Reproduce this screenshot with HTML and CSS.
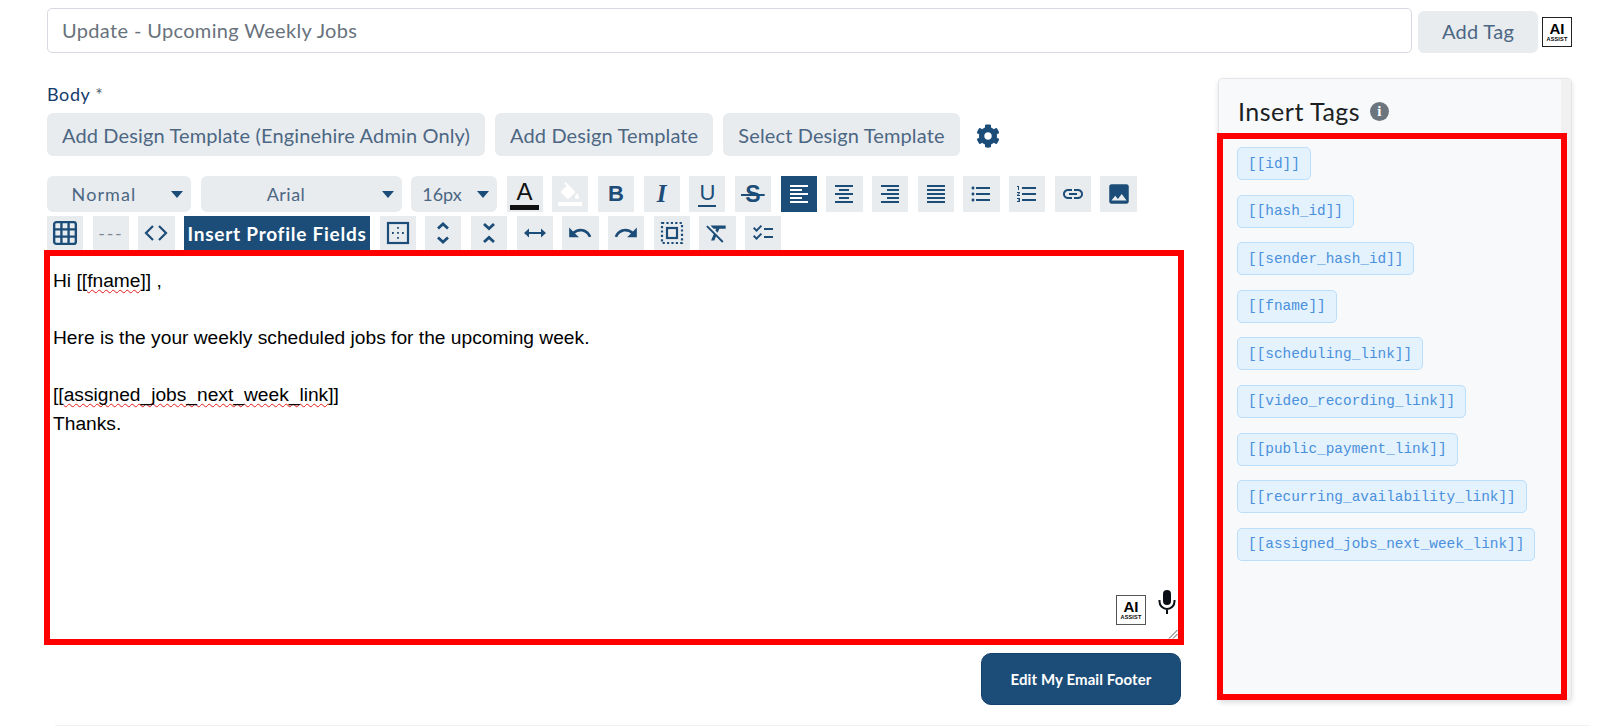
FILE: index.html
```html
<!DOCTYPE html>
<html lang="en">
<head>
<meta charset="utf-8">
<title>Update - Upcoming Weekly Jobs</title>
<link rel="stylesheet" href="styles.css">
</head>
<body>
<div class="page">
  <div class="top-row">
    <div class="subject">Update - Upcoming Weekly Jobs</div>
    <div class="btn add-tag">Add Tag</div>
    <div class="ai"><b>AI</b><small>ASSIST</small></div>
  </div>
  <div class="main">
    <div class="left">
      <div class="label"><span class="label-t">Body</span> <span class="star">*</span></div>
      <div class="tpl-row">
        <div class="btn tpl">Add Design Template (Enginehire Admin Only)</div>
        <div class="btn tpl">Add Design Template</div>
        <div class="btn tpl">Select Design Template</div>
        <svg class="gear" viewBox="0 0 512 512"><path d="M487.4 315.7l-42.6-24.6c4.3-23.2 4.3-47 0-70.2l42.6-24.6c4.9-2.8 7.1-8.6 5.5-14-11.1-35.6-30-67.8-54.7-94.6-3.8-4.1-10-5.1-14.8-2.3L380.8 110c-17.9-15.4-38.5-27.3-60.8-35.1V25.8c0-5.6-3.9-10.5-9.4-11.7-36.7-8.2-74.3-7.8-109.2 0-5.5 1.2-9.4 6.1-9.4 11.7V75c-22.2 7.9-42.8 19.8-60.8 35.1L88.7 85.5c-4.9-2.8-11-1.9-14.8 2.3-24.7 26.7-43.6 58.9-54.7 94.6-1.7 5.4.6 11.2 5.5 14L67.3 221c-4.3 23.2-4.3 47 0 70.2l-42.6 24.6c-4.9 2.8-7.1 8.6-5.5 14 11.1 35.6 30 67.8 54.7 94.6 3.8 4.1 10 5.1 14.8 2.3l42.6-24.6c17.9 15.4 38.5 27.3 60.8 35.1v49.2c0 5.6 3.9 10.5 9.4 11.7 36.7 8.2 74.3 7.8 109.2 0 5.5-1.2 9.4-6.1 9.4-11.7v-49.2c22.2-7.9 42.8-19.8 60.8-35.1l42.6 24.6c4.9 2.8 11 1.9 14.8-2.3 24.7-26.7 43.6-58.9 54.7-94.6 1.5-5.5-.7-11.3-5.6-14.1zM256 336c-44.1 0-80-35.9-80-80s35.9-80 80-80 80 35.9 80 80-35.9 80-80 80z"/></svg>
      </div>
      <div class="tools row1">
        <div class="sel sel-normal"><span>Normal</span><i class="caret"></i></div>
        <div class="sel sel-arial"><span>Arial</span><i class="caret"></i></div>
        <div class="sel sel-size"><span>16px</span><i class="caret"></i></div>
        <div class="tb color"><span class="color-a">A</span></div>
        <div class="tb fill"><svg class="ic" viewBox="0 0 24 24"><path class="wh" d="M7.600 0L6.200 1.400l2.400 2.400-5.200 5.100c-.6.6-.6 1.600 0 2.200l5.500 5.500c.3.300.7.400 1.100.4s.8-.1 1-.4l5.600-5.500c.5-.6.5-1.600 0-2.200zM19 11.500s-2 2.200-2 3.500c0 1.100.9 2 2 2s2-.9 2-2c0-1.300-2-3.500-2-3.500z"/><rect class="wh" x="0" y="20" width="24" height="4"/></svg></div>
        <div class="tb"><span class="t-b">B</span></div>
        <div class="tb"><span class="t-i">I</span></div>
        <div class="tb"><span class="t-u">U</span></div>
        <div class="tb"><span class="t-s">S</span></div>
        <div class="tb active"><svg class="ic" viewBox="0 0 24 24"><path d="M15 15H3v2h12v-2zm0-8H3v2h12V7zM3 13h18v-2H3v2zm0 8h18v-2H3v2zM3 3v2h18V3H3z"/></svg></div>
        <div class="tb"><svg class="ic" viewBox="0 0 24 24"><path d="M7 15v2h10v-2H7zm-4 6h18v-2H3v2zm0-8h18v-2H3v2zm4-6v2h10V7H7zM3 3v2h18V3H3z"/></svg></div>
        <div class="tb"><svg class="ic" viewBox="0 0 24 24"><path d="M3 21h18v-2H3v2zm6-4h12v-2H9v2zm-6-4h18v-2H3v2zm6-4h12V7H9v2zM3 3v2h18V3H3z"/></svg></div>
        <div class="tb"><svg class="ic" viewBox="0 0 24 24"><path d="M3 21h18v-2H3v2zm0-4h18v-2H3v2zm0-4h18v-2H3v2zm0-4h18V7H3v2zm0-6v2h18V3H3z"/></svg></div>
        <div class="tb"><svg class="ic" viewBox="0 0 24 24"><path d="M4 10.500c-.83 0-1.500.67-1.500 1.500s.67 1.500 1.500 1.500 1.500-.67 1.500-1.500-.67-1.500-1.500-1.500zm0-6c-.83 0-1.500.67-1.500 1.500S3.170 7.500 4 7.500 5.500 6.830 5.500 6 4.830 4.500 4 4.500zm0 12c-.83 0-1.500.68-1.500 1.500s.68 1.500 1.500 1.500 1.500-.68 1.500-1.500-.67-1.500-1.500-1.500zM7 19h14v-2H7v2zm0-6h14v-2H7v2zm0-8v2h14V5H7z"/></svg></div>
        <div class="tb"><svg class="ic" viewBox="0 0 24 24"><path d="M2 17h2v.5H3v1h1v.5H2v1h3v-4H2v1zm1-9h1V4H2v1h1v3zm-1 3h1.800L2 13.100v.9h3v-1H3.200L5 10.900V10H2v1zm5-6v2h14V5H7zm0 14h14v-2H7v2zm0-6h14v-2H7v2z"/></svg></div>
        <div class="tb"><svg class="ic" viewBox="0 0 24 24"><path d="M3.900 12c0-1.710 1.390-3.100 3.100-3.100h4V7H7c-2.760 0-5 2.240-5 5s2.240 5 5 5h4v-1.900H7c-1.710 0-3.100-1.390-3.100-3.100zM8 13h8v-2H8v2zm9-6h-4v1.900h4c1.710 0 3.100 1.390 3.100 3.100s-1.390 3.100-3.100 3.100h-4V17h4c2.760 0 5-2.240 5-5s-2.240-5-5-5z"/></svg></div>
        <div class="tb"><svg class="ic ic-lg" viewBox="0 0 24 24"><path d="M21 19V5c0-1.100-.9-2-2-2H5c-1.100 0-2 .9-2 2v14c0 1.100.9 2 2 2h14c1.100 0 2-.9 2-2zM8.500 13.500l2.500 3.010L14.500 12l4.500 6H5l3.500-4.500z"/></svg></div>
      </div>
      <div class="tools row2">
        <div class="tb"><svg class="ic ic-lg" viewBox="0 0 24 24"><rect class="ln" x="2" y="2" width="20" height="20" rx="2"/><path class="ln" d="M2 8.700h20M2 15.300h20M8.700 2v20M15.300 2v20"/></svg></div>
        <div class="tb"><span class="t-hr">---</span></div>
        <div class="tb"><svg class="ic" viewBox="0 0 24 24"><path class="ln" d="M9 5l-7 7 7 7M15 5l7 7-7 7"/></svg></div>
        <div class="tb active ipf">Insert Profile Fields</div>
        <div class="tb"><svg class="ic" viewBox="0 0 24 24"><rect class="ln" x="2" y="2" width="20" height="20"/><path class="dots" d="M12 6v2M12 11v2M12 16v2M6 12h2M16 12h2"/></svg></div>
        <div class="tb"><svg class="ic" viewBox="0 0 24 24"><path class="ln-b" d="M7 7.500L12 3l5 4.500M7 16.500l5 4.500 5-4.500"/></svg></div>
        <div class="tb"><svg class="ic" viewBox="0 0 24 24"><path class="ln-b" d="M7 3l5 4.500L17 3M7 21l5-4.500 5 4.500"/></svg></div>
        <div class="tb"><svg class="ic" viewBox="0 0 24 24"><path d="M1 12l5-4.500V11h12V7.500l5 4.500-5 4.500V13H6v3.500z"/></svg></div>
        <div class="tb"><svg class="ic ic-lg" viewBox="0 0 24 24"><path d="M12.500 8c-2.650 0-5.050.99-6.900 2.600L2 7v9h9l-3.620-3.620c1.390-1.160 3.160-1.880 5.120-1.880 3.540 0 6.550 2.310 7.600 5.500l2.370-.78C21.080 11.030 17.150 8 12.500 8z"/></svg></div>
        <div class="tb"><svg class="ic ic-lg" viewBox="0 0 24 24"><path d="M18.400 10.600C16.550 8.990 14.150 8 11.500 8c-4.650 0-8.580 3.030-9.960 7.220L3.900 16c1.050-3.190 4.050-5.500 7.600-5.500 1.950 0 3.730.72 5.120 1.880L13 16h9V7l-3.600 3.600z"/></svg></div>
        <div class="tb"><svg class="ic" viewBox="0 0 24 24"><rect class="ln" x="7" y="7" width="10" height="10"/><rect class="dash" x="2" y="2" width="20" height="20"/></svg></div>
        <div class="tb"><svg class="ic ic-lg" viewBox="0 0 24 24"><path d="M3.270 5L2 6.270l6.970 6.970L6.500 19h3l1.570-3.660L16.730 21 18 19.730 3.550 5.270 3.270 5zM6 5v.18L8.820 8h2.400l-.72 1.680 2.100 2.100L14.210 8H20V5H6z"/></svg></div>
        <div class="tb"><svg class="ic" viewBox="0 0 24 24"><path d="M22 7h-9v2h9V7zm0 8h-9v2h9v-2zM5.540 11L2 7.460l1.410-1.410 2.120 2.120 4.240-4.240 1.410 1.410L5.540 11zm0 8L2 15.460l1.410-1.410 2.120 2.120 4.240-4.240 1.410 1.410L5.540 19z"/></svg></div>
      </div>
      <div class="editor-frame">
        <div class="editor">
          <p>Hi [[<span class="sp">fname</span>]] ,</p>
          <p><br></p>
          <p>Here is the your weekly scheduled jobs for the upcoming week.</p>
          <p><br></p>
          <p>[[<span class="sp">assigned_jobs_next_week_link</span>]]</p>
          <p>Thanks.</p>
          <div class="ai ai-editor"><b>AI</b><small>ASSIST</small></div>
          <svg class="mic" viewBox="0 0 18 24"><rect x="5" y="0" width="8" height="15" rx="4"/><path class="mic-l" d="M1.500 10v1.500a7.500 7.500 0 0 0 15 0V10M9 19v5"/></svg>
          <svg class="grip" viewBox="0 0 10 10"><path d="M9.500 1L1 9.500M9.500 5L5 9.500"/></svg>
        </div>
      </div>
      <div class="foot-row"><div class="footer-btn">Edit My Email Footer</div></div>
    </div>
    <aside class="panel">
      <div class="track"></div>
      <h2 class="panel-h">Insert Tags <span class="info">i</span></h2>
      <div class="tag-frame">
        <span class="tag">[[id]]</span>
        <span class="tag">[[hash_id]]</span>
        <span class="tag">[[sender_hash_id]]</span>
        <span class="tag">[[fname]]</span>
        <span class="tag">[[scheduling_link]]</span>
        <span class="tag">[[video_recording_link]]</span>
        <span class="tag">[[public_payment_link]]</span>
        <span class="tag">[[recurring_availability_link]]</span>
        <span class="tag">[[assigned_jobs_next_week_link]]</span>
      </div>
    </aside>
  </div>
  <div class="rule"></div>
</div>
</body>
</html>
```
FILE: styles.css
```css
* { box-sizing: border-box; }
html, body { margin: 0; padding: 0; background: #fff; overflow: hidden; }
body { font-family: "Lato", "Noto Sans", sans-serif; color: #4c6783; }

.page { width: 1600px; height: 726px; padding-top: 8px; }

.top-row { display: flex; align-items: flex-end; margin-left: 47px; width: 1525px; }
.subject {
  width: 1365px; height: 45px; border: 1px solid #d6dae0; border-radius: 5px;
  display: flex; align-items: center; padding: 0 0 2px 14px;
  font-size: 20px; letter-spacing: .35px; color: #68727c;
}
.btn {
  background: #e9ecef; border-radius: 6px; display: flex; align-items: center; justify-content: center;
  font-size: 20px; color: #4c6783;
}
.add-tag { width: 120px; height: 42px; margin-left: 6px; padding-bottom: 3px; letter-spacing: .3px; }
.ai {
  width: 30px; height: 30px; border: 1px solid #222; background: #fff; color: #000;
  display: flex; flex-direction: column; align-items: center; justify-content: center; font-family: "Liberation Sans", sans-serif;
}
.ai b { font-size: 15px; line-height: 14px; font-weight: 700; }
.ai small { font-size: 5.5px; line-height: 7px; font-weight: 700; letter-spacing: .2px; }
.top-row > .ai { margin-left: 4px; margin-bottom: 6px; }

.main { display: flex; margin-top: 25px; margin-left: 44px; }
.left { width: 1140px; }
.label { height: 35px; padding: 5px 0 0 3px; font-size: 18px; line-height: 22px; letter-spacing: .6px; }
.label-t { color: #123c6c; }
.star { color: #55606b; font-size: 18px; }

.tpl-row { display: flex; align-items: center; gap: 10px; margin-left: 3px; }
.tpl { height: 43px; padding: 0 15px; letter-spacing: .13px; }
.tpl-row .tpl:nth-child(3) { margin-right: 6px; }
.gear { width: 24px; height: 24px; fill: #1c4d78; margin-top: 2px; }

.tools { display: flex; margin-left: 3px; }
.row1 { margin-top: 20px; height: 36px; gap: 9.5px; }
.row2 { margin-top: 4px; height: 34px; gap: 9.5px; }

.sel {
  height: 36px; background: #e9ecef; border-radius: 6px; display: flex; align-items: center;
  font-size: 18px; color: #4c6783; padding-right: 8px;
}
.sel span { flex: 1; text-align: center; margin-right: 10px; }
.sel-normal { width: 144px; letter-spacing: 1.1px; }
.sel-arial { width: 201px; letter-spacing: .5px; }
.sel-size { width: 86px; letter-spacing: 0; }
.sel-size span { margin-right: 4px; }
.caret { width: 0; height: 0; border-left: 6px solid transparent; border-right: 6px solid transparent; border-top: 7px solid #1c4d78; }

.tb {
  width: 36.2px; background: #e9ecef; display: flex; align-items: center; justify-content: center;
  color: #1c4d78; flex: none;
}
.ic { width: 24px; height: 24px; fill: #1c4d78; }
.ic-lg { width: 26px; height: 26px; }
.active { background: #1c4d78; }
.active .ic { fill: #fff; }
.ln { fill: none; stroke: #1c4d78; stroke-width: 2.2px; }
.ln-b { fill: none; stroke: #1c4d78; stroke-width: 2.8px; }
.dots { fill: none; stroke: #1c4d78; stroke-width: 1.8px; stroke-dasharray: 1.8 1.8; }
.dash { fill: none; stroke: #1c4d78; stroke-width: 2.2px; stroke-dasharray: 2.2 2.2; }
.wh { fill: #fff; }

.color-a {
  font-family: "Liberation Sans", sans-serif; font-size: 24px; line-height: 26px; color: #111;
  border-bottom: 5px solid #111; width: 29px; text-align: center; height: 31px; display: block;
}
.t-b { font-family: "Liberation Sans", sans-serif; font-weight: 700; font-size: 22px; }
.t-i { font-family: "Liberation Serif", serif; font-weight: 700; font-style: italic; font-size: 25px; }
.t-u { font-family: "Liberation Sans", sans-serif; font-size: 22px; line-height: 21px; border-bottom: 2px solid #1c4d78; padding: 0 1px 2px; height: 25px; }
.t-s {
  font-family: "Liberation Sans", sans-serif; font-size: 23px; font-weight: 700; padding: 0 4px;
  background: linear-gradient(#1c4d78, #1c4d78) center 54% / 100% 2px no-repeat;
}
.t-hr { font-size: 18px; letter-spacing: 1.6px; color: #7a8a99; }

.ipf {
  width: 186px; color: #fff; font-weight: 700; font-size: 19px; letter-spacing: .75px; white-space: nowrap;
}

.editor-frame { height: 395px; border: 6px solid #f00; }
.editor {
  position: relative; height: 100%; padding: 11px 0 0 3px;
  font-family: "Liberation Sans", Arial, sans-serif; font-size: 19.2px; color: #000;
}
.editor p { margin: 0; line-height: 28.5px; height: 28.5px; }
.sp { text-decoration: underline wavy #e21b1b 1px; text-underline-offset: 2px; text-decoration-skip-ink: none; }
.ai-editor { position: absolute; right: 32px; bottom: 14px; border-color: #555; }
.mic { position: absolute; right: 2px; bottom: 25px; width: 18px; height: 24px; fill: #0a0f16; }
.mic-l { fill: none; stroke: #0a0f16; stroke-width: 2; }
.grip { position: absolute; right: 0; bottom: 0; width: 10px; height: 10px; }
.grip path { fill: none; stroke: #555; stroke-width: 1; }

.foot-row { display: flex; justify-content: flex-end; margin-top: 8px; padding-right: 3px; }
.footer-btn {
  width: 200px; height: 52px; background: #1c4d78; border: 1px solid #15406a; border-radius: 10px; color: #fff;
  font-weight: 700; font-size: 15px; letter-spacing: .1px;
  display: flex; align-items: center; justify-content: center;
}

.panel {
  position: relative; width: 354px; height: 623px; margin-left: 34px;
  background: #f8f9fa; border: 1px solid #e3e5e8; border-radius: 5px;
  box-shadow: 0 2px 5px rgba(0,0,0,.12);
  display: flex; flex-direction: column;
}
.track { position: absolute; top: 0; right: 0; bottom: 0; width: 10px; background: #f1f1f1; border-radius: 0 5px 5px 0; }
.panel-h {
  height: 54px; margin: 0; padding: 10px 0 0 19px; font-size: 25px; line-height: 30px; font-weight: 400; letter-spacing: .5px; color: #1b1f23;
  display: flex; align-items: center; gap: 10px;
}
.info {
  width: 19px; height: 19px; border-radius: 50%; background: #6c757d; color: #fff;
  font-family: "Liberation Serif", serif; font-weight: 700; font-size: 15px; line-height: 19px; text-align: center;
}
.tag-frame {
  position: relative; flex: 1; margin-left: -2px; width: 350px; border: 6px solid #f00;
  padding: 8px 0 0 14px; display: flex; flex-direction: column; align-items: flex-start; gap: 14.6px;
}
.tag {
  height: 33px; padding: 0 10px; display: flex; align-items: center; white-space: nowrap;
  background: #e3f2fd; border: 1px solid #bbdefb; border-radius: 5px;
  font-family: "Liberation Mono", monospace; font-size: 14.4px; color: #4a90dc;
}
.rule { height: 1px; background: #f1f2f4; margin: 20px 10px 0 55px; }
```
